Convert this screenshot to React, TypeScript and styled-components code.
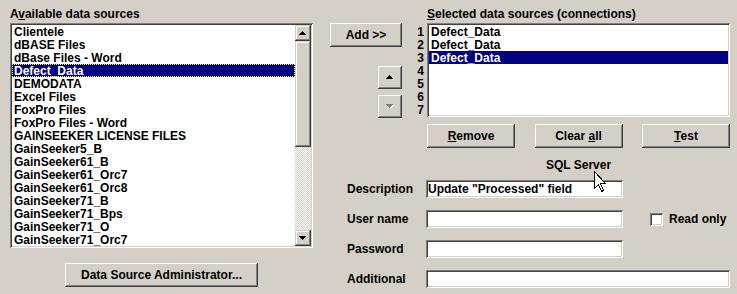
import React from 'react';
import styled, { createGlobalStyle } from 'styled-components';

const Global = createGlobalStyle`
  html, body { margin: 0; padding: 0; background: #d4d0c8; }
  body { font-family: "Liberation Sans", Arial, sans-serif; }
  * { box-sizing: border-box; }
`;

const raised = `
  background: #d4d0c8;
  box-shadow: inset -1px -1px #404040, inset 1px 1px #ffffff, inset -2px -2px #808080, inset 2px 2px #d4d0c8;
`;

const sunken = `
  box-shadow: inset 1px 1px #808080, inset -1px -1px #ffffff, inset 2px 2px #404040, inset -2px -2px #d4d0c8;
`;

const Window = styled.div`
  position: relative;
  width: 737px;
  height: 294px;
  overflow: hidden;
  display: flex;
  padding-left: 10px;
  background: #d4d0c8;
  color: #000;
  font: bold 12px "Liberation Sans", Arial, sans-serif;
`;

const LeftCol = styled.div`
  width: 303px;
  display: flex;
  flex-direction: column;
`;

const GroupLabel = styled.div<{ $indent?: number }>`
  height: 23px;
  padding-top: 8px;
  padding-left: ${(p) => p.$indent ?? 0}px;
  line-height: 13px;
  white-space: nowrap;
`;

const ListBox = styled.div<{ $w: number; $h: number }>`
  width: ${(p) => p.$w}px;
  height: ${(p) => p.$h}px;
  padding: 2px;
  display: flex;
  background: #fff;
  ${sunken}
`;

const Items = styled.div`
  flex: 1;
  overflow: hidden;
  background: #fff;
`;

const Item = styled.div<{ $sel?: boolean; $focus?: boolean }>`
  height: 13px;
  line-height: 14px;
  padding-left: 2px;
  white-space: nowrap;
  background: ${(p) => (p.$sel ? '#000080' : 'transparent')};
  color: ${(p) => (p.$sel ? '#fff' : '#000')};
  outline: ${(p) => (p.$focus ? '1px dotted #ffff00' : 'none')};
  outline-offset: -1px;
`;

const ScrollBar = styled.div`
  width: 16px;
  display: flex;
  flex-direction: column;
  background: repeating-conic-gradient(#d4d0c8 0% 25%, #ffffff 0% 50%) 0 0 / 2px 2px;
`;

const ScrollBtn = styled.div`
  width: 16px;
  height: 16px;
  display: flex;
  align-items: center;
  justify-content: center;
  ${raised}
  box-shadow: inset -1px -1px #404040, inset 1px 1px #d4d0c8, inset -2px -2px #808080, inset 2px 2px #ffffff;
`;

const Thumb = styled.div<{ $h: number }>`
  height: ${(p) => p.$h}px;
  ${raised}
  box-shadow: inset -1px -1px #404040, inset 1px 1px #d4d0c8, inset -2px -2px #808080, inset 2px 2px #ffffff;
`;

const Track = styled.div`
  flex: 1;
`;

const Button = styled.div<{ $w: number; $h?: number; $mt?: number }>`
  width: ${(p) => p.$w}px;
  height: ${(p) => p.$h ?? 24}px;
  margin-top: ${(p) => p.$mt ?? 0}px;
  display: flex;
  align-items: center;
  justify-content: center;
  white-space: nowrap;
  line-height: 13px;
  ${raised}
`;

const AdminButton = styled(Button)`
  align-self: center;
`;

const RightArea = styled.div`
  margin-left: 17px;
  width: 400px;
  display: flex;
  flex-direction: column;
`;

const TopRow = styled.div`
  display: flex;
`;

const MidCol = styled.div`
  width: 72px;
  padding-top: 23px;
  display: flex;
  flex-direction: column;
  align-items: flex-end;
`;

const ConnCol = styled.div`
  margin-left: 13px;
  width: 315px;
  display: flex;
  flex-direction: column;
`;

const ConnRow = styled.div`
  display: flex;
`;

const NumCol = styled.div`
  width: 12px;
  padding-top: 2px;
  padding-right: 3px;
  text-align: right;
`;

const Num = styled.div`
  height: 13px;
  line-height: 14px;
`;

const ButtonsRow = styled.div`
  margin-top: 6px;
  margin-left: 97px;
  display: flex;
  justify-content: space-between;
`;

const SqlLabel = styled.div`
  margin-top: 11px;
  margin-left: 97px;
  line-height: 13px;
  text-align: center;
`;

const FormGrid = styled.div`
  margin-top: 8px;
  padding-left: 17px;
  display: grid;
  grid-template-columns: 79px 197px 1fr;
  grid-auto-rows: 18px;
  row-gap: 12px;
  align-items: center;
`;

const FieldLabel = styled.div`
  grid-column: 1;
  line-height: 13px;
  white-space: nowrap;
`;

const Field = styled.div<{ $wide?: boolean }>`
  grid-column: ${(p) => (p.$wide ? '2 / 4' : '2')};
  height: 18px;
  padding: 2px 2px 0;
  line-height: 14px;
  white-space: nowrap;
  overflow: hidden;
  background: #fff;
  ${sunken}
`;

const CheckCell = styled.label`
  grid-column: 3;
  padding-left: 27px;
  display: flex;
  align-items: center;
  gap: 6px;
  line-height: 13px;
`;

const CheckBox = styled.span`
  width: 13px;
  height: 13px;
  background: #fff;
  ${sunken}
`;

const Cursor = styled.svg`
  position: absolute;
  left: 594px;
  top: 171px;
`;

const Arrow = ({ up, disabled }: { up?: boolean; disabled?: boolean }) => (
  <svg width="8" height="5" viewBox="0 0 8 5" shapeRendering="crispEdges">
    {disabled && (
      <polygon points={up ? '4,1 8,5 1,5' : '1,1 8,1 4.5,5'} fill="#ffffff" />
    )}
    <polygon
      points={up ? '3.5,0 7,4 0,4' : '0,0 7,0 3.5,4'}
      fill={disabled ? '#808080' : '#000'}
    />
  </svg>
);

const sources = [
  'Clientele',
  'dBASE Files',
  'dBase Files - Word',
  'Defect_Data',
  'DEMODATA',
  'Excel Files',
  'FoxPro Files',
  'FoxPro Files - Word',
  'GAINSEEKER LICENSE FILES',
  'GainSeeker5_B',
  'GainSeeker61_B',
  'GainSeeker61_Orc7',
  'GainSeeker61_Orc8',
  'GainSeeker71_B',
  'GainSeeker71_Bps',
  'GainSeeker71_O',
  'GainSeeker71_Orc7',
];

const selected = ['Defect_Data', 'Defect_Data', 'Defect_Data'];

export default function App() {
  return (
    <>
      <Global />
      <Window>
        <LeftCol>
          <GroupLabel>
            A<u>v</u>ailable data sources
          </GroupLabel>
          <ListBox $w={303} $h={225}>
            <Items>
              {sources.map((s, i) => (
                <Item key={s} $sel={i === 3} $focus={i === 3}>
                  {s}
                </Item>
              ))}
            </Items>
            <ScrollBar>
              <ScrollBtn>
                <Arrow up />
              </ScrollBtn>
              <Thumb $h={106} />
              <Track />
              <ScrollBtn>
                <Arrow />
              </ScrollBtn>
            </ScrollBar>
          </ListBox>
          <AdminButton $w={193} $mt={15}>
            Data Source Administrator...
          </AdminButton>
        </LeftCol>

        <RightArea>
          <TopRow>
            <MidCol>
              <Button $w={72}>Add &gt;&gt;</Button>
              <Button $w={24} $h={23} $mt={19}>
                <Arrow up />
              </Button>
              <Button $w={24} $h={23} $mt={6}>
                <Arrow disabled />
              </Button>
            </MidCol>
            <ConnCol>
              <GroupLabel $indent={12}>
                <u>S</u>elected data sources (connections)
              </GroupLabel>
              <ConnRow>
                <NumCol>
                  {[1, 2, 3, 4, 5, 6, 7].map((n) => (
                    <Num key={n}>{n}</Num>
                  ))}
                </NumCol>
                <ListBox $w={303} $h={94}>
                  <Items>
                    {selected.map((s, i) => (
                      <Item key={i} $sel={i === 2}>
                        {s}
                      </Item>
                    ))}
                  </Items>
                </ListBox>
              </ConnRow>
            </ConnCol>
          </TopRow>

          <ButtonsRow>
            <Button $w={88}>
              <span>
                <u>R</u>emove
              </span>
            </Button>
            <Button $w={88}>
              <span>
                Clear <u>a</u>ll
              </span>
            </Button>
            <Button $w={88}>
              <span>
                <u>T</u>est
              </span>
            </Button>
          </ButtonsRow>

          <SqlLabel>SQL Server</SqlLabel>

          <FormGrid>
            <FieldLabel>Description</FieldLabel>
            <Field>Update "Processed" field</Field>
            <span />
            <FieldLabel>User name</FieldLabel>
            <Field />
            <CheckCell>
              <CheckBox />
              Read only
            </CheckCell>
            <FieldLabel>Password</FieldLabel>
            <Field />
            <span />
            <FieldLabel>Additional</FieldLabel>
            <Field $wide />
          </FormGrid>
        </RightArea>

        <Cursor width="13" height="22" viewBox="0 0 13 22" shapeRendering="crispEdges">
          <polygon
            points="0.5,0.5 0.5,17.5 4.5,13.5 7.5,20.5 9.5,19.5 6.5,12.5 11.5,12.5"
            fill="#ffffff"
            stroke="#000"
            strokeWidth="1"
          />
        </Cursor>
      </Window>
    </>
  );
}
